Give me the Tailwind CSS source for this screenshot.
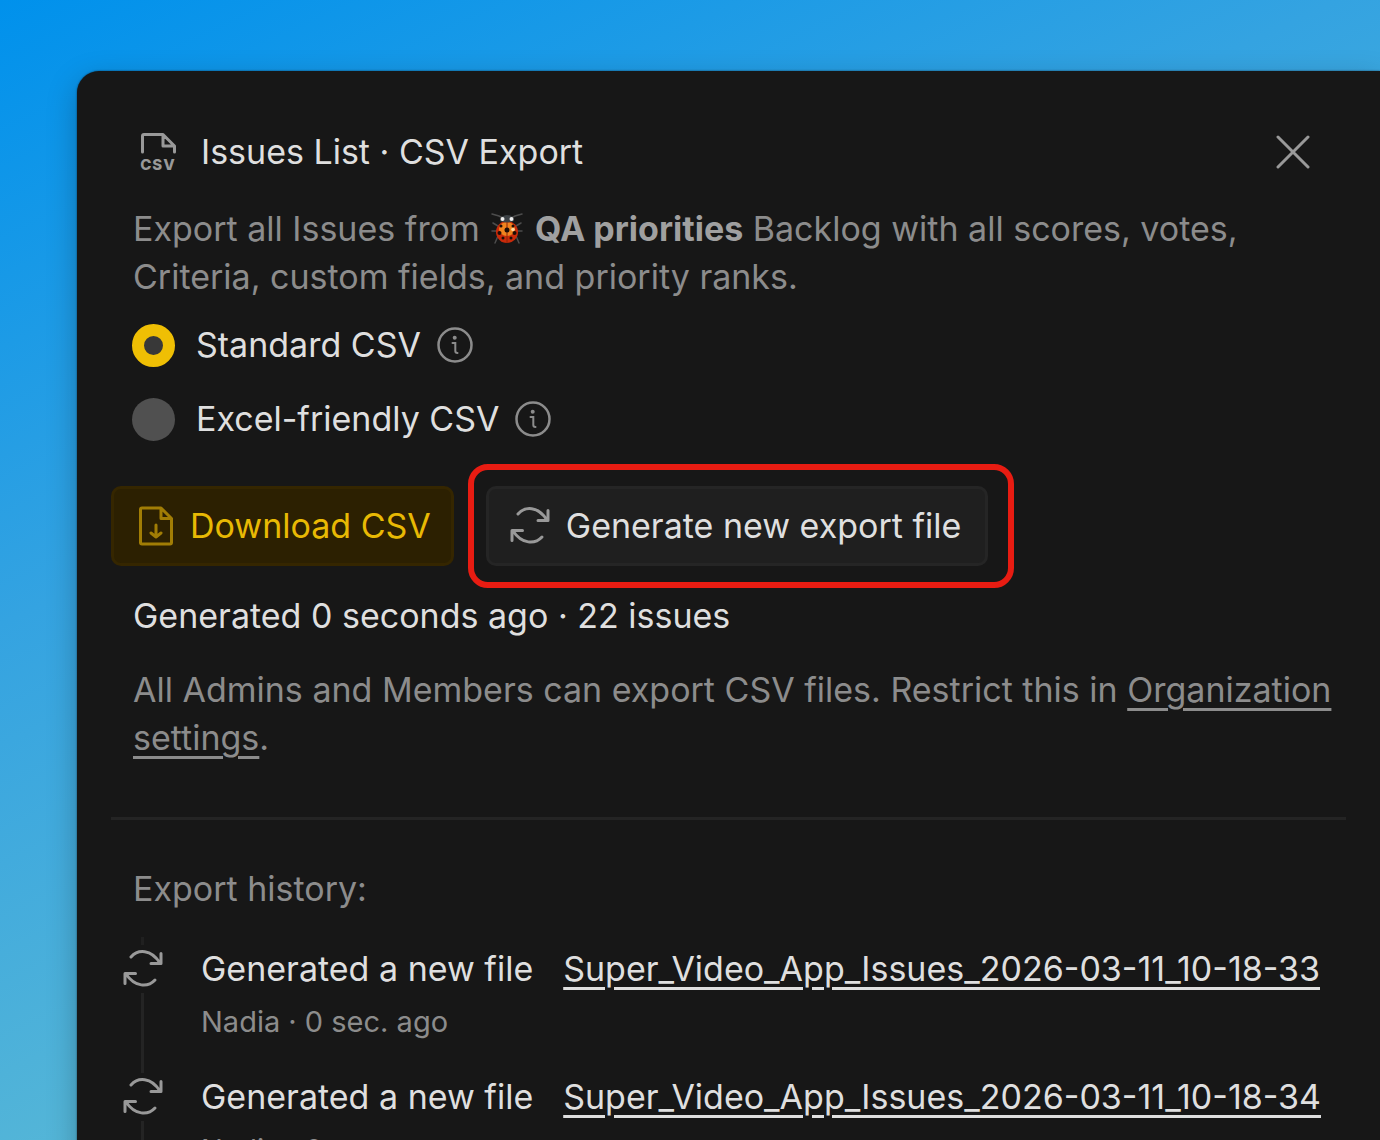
<!DOCTYPE html>
<html lang="en">
<head>
  <meta charset="UTF-8">
  <title>Issues List · CSV Export</title>
  <script src="https://cdn.jsdelivr.net/npm/@tailwindcss/browser@4"></script>
</head>
<body class="h-screen overflow-hidden bg-[linear-gradient(155deg,#0091ec_0%,#34a3e1_35%,#55b6d7_67%)] pl-[77px] pt-[71px] font-['Inter',sans-serif] text-[34px] leading-[48px] text-[#dfdfdf]">
  <svg class="hidden">
    <symbol id="refresh" viewBox="0 0 40 40" fill="none" stroke="currentColor" stroke-width="3" stroke-linecap="round" stroke-linejoin="round">
      <path d="M8 8C15 0 28 0 37 14M38 4.500V14.500H28"/>
      <path d="M32 31C25 38.500 12 38.500 3 25M2 34.500V24.500H12.500"/>
    </symbol>
    <symbol id="info" viewBox="0 0 36 36" fill="none" stroke="currentColor" stroke-width="2.500">
      <circle cx="18" cy="18" r="16.500"/>
      <circle cx="17.700" cy="10.700" r="2" fill="currentColor" stroke="none"/>
      <path d="M15.500 16H18.300V24Q18.300 26 20.500 26" stroke-width="2" stroke-linecap="round"/>
    </symbol>
  </svg>

  <main class="min-h-screen rounded-tl-[22px] bg-[#171717] pl-[34px] pr-[34px] pt-[57px] shadow-[0_10px_30px_rgba(0,0,0,0.25),0_0_2px_rgba(0,0,0,0.6)]">
    <header class="flex items-center justify-between pl-7">
      <div class="flex items-center gap-6">
        <svg class="h-10 w-[38px] overflow-visible text-[#999]" viewBox="0 0 38 40" fill="none" stroke="currentColor" stroke-width="3">
          <path d="M3.500 20V4Q3.500 2.500 5 2.500H24L35.500 14V20M24 2.500V14H35.500" stroke-linecap="round" stroke-linejoin="round"/>
          <text x="19" y="38" text-anchor="middle" font-size="15" font-weight="800" letter-spacing="1" fill="currentColor" stroke="none">CSV</text>
        </svg>
        <h1>Issues List · CSV Export</h1>
      </div>
      <button class="mr-9 text-[#999]" aria-label="Close">
        <svg class="size-[34px]" viewBox="0 0 34 34" stroke="currentColor" stroke-width="3" stroke-linecap="round">
          <path d="M2 2L32 32M32 2L2 32"/>
        </svg>
      </button>
    </header>

    <p class="mt-[29px] pl-[22px] text-[#8c8c8c]">
      Export all Issues from
      <svg class="mx-[2px] inline size-8 align-[-4px]" viewBox="0 0 32 32" fill="none">
        <path d="M12 5L8 3L1 1M20 5L24 3L31 1M7 13L2 10M25 13L30 10M6 18H1M26 18H31M7 23L4 30M25 23L28 30" stroke="#4c4c4c" stroke-width="1.500" stroke-linecap="round"/>
        <ellipse cx="16" cy="19" rx="11" ry="11" fill="#c92a0a"/>
        <ellipse cx="16" cy="16" rx="8" ry="7" fill="#f0831e"/>
        <path d="M9 8Q10 2 16 2T23 8Q16 11 9 8" fill="#3c4145"/>
        <circle cx="11.500" cy="6" r="2" fill="#eee"/><circle cx="20.500" cy="6" r="2" fill="#eee"/>
        <path d="M16 9V30" stroke="#8a2408"/>
        <g fill="#1d0d08"><circle cx="16" cy="17" r="2.500"/><circle cx="10" cy="13" r="1.500"/><circle cx="22" cy="13" r="1.500"/><circle cx="8.500" cy="20" r="2"/><circle cx="23.500" cy="20" r="2"/><circle cx="12" cy="25" r="1.500"/><circle cx="20" cy="25" r="1.500"/></g>
        <circle cx="22" cy="16.500" r="1.800" fill="#ffd9a0"/>
      </svg>
      <strong class="font-bold text-[#a0a0a0]">QA priorities</strong> Backlog with all scores, votes, Criteria, custom fields, and priority ranks.
    </p>

    <div class="mt-5 flex flex-col gap-[26px] pl-[21px]">
      <div class="flex items-center">
        <input type="radio" name="format" id="standard" checked class="size-[43px] appearance-none rounded-full bg-[#505050] checked:border-[12px] checked:border-[#efbf04] checked:bg-[#383838]">
        <label for="standard" class="pl-[21px]">Standard CSV</label>
        <svg class="ml-4 size-9 text-[#8c8c8c]"><use href="#info"/></svg>
      </div>
      <div class="flex items-center">
        <input type="radio" name="format" id="excel" class="size-[43px] appearance-none rounded-full bg-[#505050] checked:border-[12px] checked:border-[#efbf04] checked:bg-[#383838]">
        <label for="excel" class="pl-[21px]">Excel-friendly CSV</label>
        <svg class="ml-4 size-9 text-[#8c8c8c]"><use href="#info"/></svg>
      </div>
    </div>

    <div class="mt-[21px] flex items-center gap-[14px]">
      <button class="flex h-20 items-center gap-4 rounded-[10px] border-[3px] border-[#352600] bg-[#2c2001] pl-6 pr-5 text-[#e8b904]">
        <svg class="h-10 w-9 text-[#a17d05]" viewBox="0 0 36 40" fill="none" stroke="currentColor" stroke-width="3" stroke-linejoin="round" stroke-linecap="round">
          <path d="M4 2H23L33.500 12.500V36.500Q33.500 38 32 38H4Q2.500 38 2.500 36.500V3.500Q2.500 2 4 2ZM23 2V12.500H33.500M18 19V31M13 27L18 31L23 27"/>
        </svg>
        Download CSV
      </button>
      <div class="rounded-[20px] border-[6px] border-[#e81c12] py-4 pl-3 pr-5">
        <button class="flex h-20 items-center gap-4 rounded-[10px] border-[3px] border-[#252525] bg-[#1f1f1f] pl-[21px] pr-6">
          <svg class="size-10 text-[#999]"><use href="#refresh"/></svg>
          Generate new export file
        </button>
      </div>
    </div>

    <p class="mt-1 pl-[22px]">Generated 0 seconds ago · 22 issues</p>
    <p class="mt-[26px] pl-[22px] text-[#8c8c8c]">
      All Admins and Members can export CSV files. Restrict this in <a href="#" class="underline decoration-[3px] underline-offset-[6px]">Organization settings</a>.
    </p>

    <hr class="mt-[55px] border-t-[3px] border-[#242424]">

    <h2 class="mt-[45px] pl-[22px] text-[#8c8c8c]">Export history:</h2>
    <ol class="mt-6 pl-[11px] pr-[21px]">
      <li class="flex gap-[38px]">
        <div class="flex w-[41px] shrink-0 flex-col items-center gap-1">
          <span class="h-2 w-[3px] bg-[#202020]"></span>
          <svg class="size-10 shrink-0 text-[#999]"><use href="#refresh"/></svg>
          <span class="w-[3px] grow bg-[#242424]"></span>
        </div>
        <div class="min-w-0 grow pb-[31px] pt-2">
          <div class="flex gap-[30px]">
            <span class="shrink-0">Generated a new file</span>
            <a href="#" class="overflow-hidden whitespace-nowrap underline decoration-[3px] underline-offset-[6px]">Super_Video_App_Issues_2026-03-11_10-18-33</a>
          </div>
          <p class="mt-[9px] text-[29px] leading-[40px] text-[#8c8c8c]">Nadia · 0 sec. ago</p>
        </div>
      </li>
      <li class="flex gap-[38px]">
        <div class="flex w-[41px] shrink-0 flex-col items-center gap-1">
          <span class="h-0 w-[3px]"></span>
          <svg class="size-10 shrink-0 text-[#999]"><use href="#refresh"/></svg>
          <span class="w-[3px] grow bg-[#242424]"></span>
        </div>
        <div class="min-w-0 grow pb-[31px]">
          <div class="flex gap-[30px]">
            <span class="shrink-0">Generated a new file</span>
            <a href="#" class="overflow-hidden whitespace-nowrap underline decoration-[3px] underline-offset-[6px]">Super_Video_App_Issues_2026-03-11_10-18-34</a>
          </div>
          <p class="mt-[9px] text-[29px] leading-[40px] text-[#8c8c8c]">Nadia · 0 sec. ago</p>
        </div>
      </li>
    </ol>
  </main>
</body>
</html>
